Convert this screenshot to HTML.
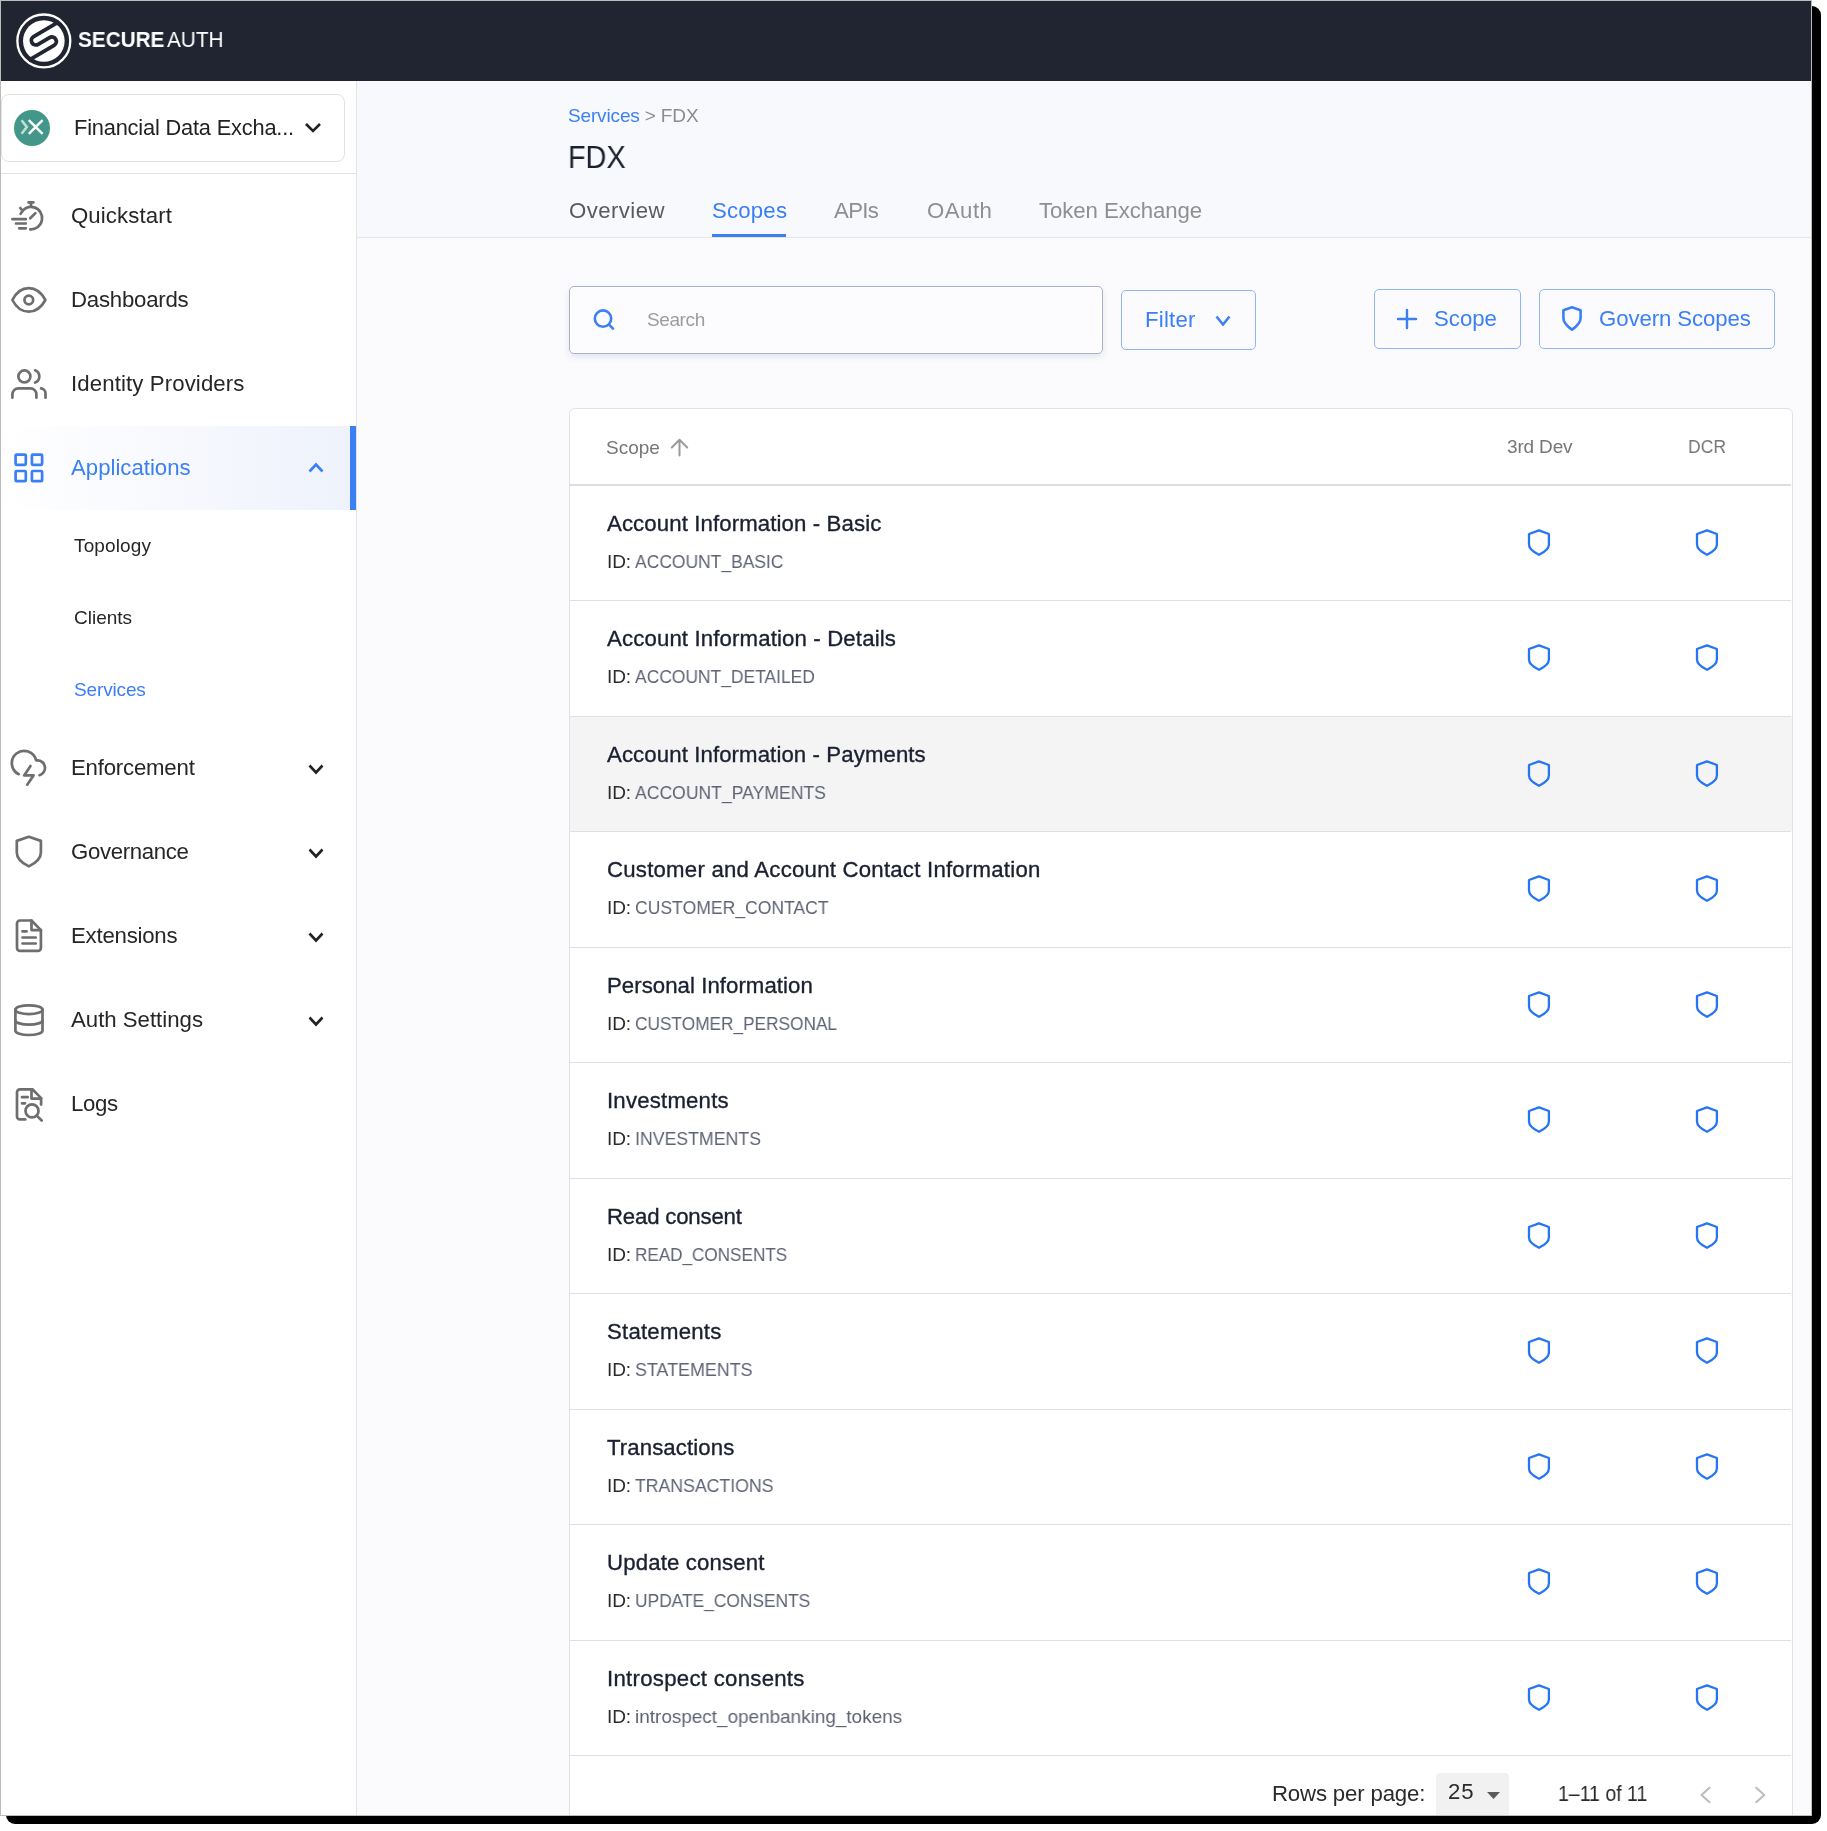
<!DOCTYPE html><html><head><meta charset="utf-8"><title>SecureAuth - FDX Scopes</title><style>
*{margin:0;padding:0;box-sizing:border-box}
html,body{width:1827px;height:1831px;background:#fff;overflow:hidden;font-family:"Liberation Sans",sans-serif}
.t{position:absolute;white-space:nowrap;will-change:transform}
.abs{position:absolute}
svg{position:absolute;overflow:visible}
</style></head><body>
<div class="abs" style="left:6px;top:6px;width:1815px;height:1818px;background:#000;border-radius:9px"></div>
<div class="abs" style="left:0;top:0;width:1812px;height:1816px;background:#fbfbfd;border:1px solid #bcbcbc;overflow:hidden">
<div style="position:absolute;left:-1px;top:-1px;width:1812px;height:1816px">
<div class="abs" style="left:0;top:0;width:1812px;height:81px;background:#212531"></div>
<svg style="left:15.5px;top:12.5px" width="56" height="56" viewBox="0 0 56 56">
<circle cx="27.83" cy="27.95" r="26.45" fill="none" stroke="#fff" stroke-width="2.3"/>
<circle cx="27.83" cy="27.95" r="20.8" fill="#fff"/>
<g transform="translate(27.83 27.95) rotate(-30.4)">
<path d="M 23 -9 L -6.6 -9 A 4.5 4.5 0 0 0 -6.6 0 L 6.6 0 A 4.5 4.5 0 0 1 6.6 9 L -23 9" fill="none" stroke="#212531" stroke-width="3.8"/>
</g></svg>
<div class="t" style="left:77.50px;top:29.16px;font-size:22.6px;line-height:22.6px;color:#fff;font-weight:700;letter-spacing:0.000px;transform:scaleX(0.918);transform-origin:0 0;">SECURE</div>
<div class="t" style="left:167.00px;top:29.16px;font-size:22.6px;line-height:22.6px;color:#fff;font-weight:400;letter-spacing:0.000px;transform:scaleX(0.918);transform-origin:0 0;">AUTH</div>
<div class="abs" style="left:0;top:81px;width:357px;height:1740px;background:#fff;border-right:1px solid #e4e4e4"></div>
<div class="abs" style="left:1px;top:94px;width:344px;height:68px;border:1px solid #e2e2e2;border-radius:8px;background:#fff"></div>
<div class="abs" style="left:14px;top:110px;width:36px;height:36px;border-radius:50%;background:#43978a"></div>
<svg style="left:14px;top:110px" width="36" height="36" viewBox="0 0 36 36">
<path d="M7.6 10.2 L12.8 17 L7.6 23.8" fill="none" stroke="#c3ddd6" stroke-width="2.6"/>
<path d="M14.8 10.2 L28.6 23.8 M28.6 10.2 L14.8 23.8" fill="none" stroke="#fff" stroke-width="2.4"/>
</svg>
<div class="t" id="k_org" style="left:73.60px;top:116.54px;font-size:21.8px;line-height:21.8px;color:#222;font-weight:400;letter-spacing:-0.182px;">Financial Data Excha...</div>
<svg style="left:304px;top:122px" width="18" height="12" viewBox="0 0 18 12"><path d="M2 2 L9 9 L16 2" fill="none" stroke="#222" stroke-width="2.6"/></svg>
<div class="abs" style="left:0;top:173px;width:356px;height:1px;background:#e3e3e3"></div>
<div class="abs" style="left:1px;top:426px;width:355px;height:84px;background:linear-gradient(90deg,#ffffff 0%,#eef2fc 100%)"></div>
<div class="abs" style="left:350px;top:426px;width:6px;height:84px;background:#3b7ff5"></div>
<svg style="left:5px;top:195px" width="50" height="40" viewBox="0 0 50 40"><g fill="none" stroke="#6e6e6e" stroke-width="2.7" stroke-linecap="round" stroke-linejoin="round"><path d="M25.2 34.3 A11.2 11.2 0 1 0 15.6 18.8"/><path d="M23.5 7.4 H28.4 M26 8.2 V11.6"/><path d="M15.3 13 L16.4 14.3"/><path d="M25.2 23.3 L30.4 18.1"/><path d="M7.4 24.2 H20.8 M11 28.5 H20.8 M14.2 33.3 H20.8"/></g></svg>
<svg style="left:5px;top:280px" width="50" height="40" viewBox="0 0 50 40"><g fill="none" stroke="#6e6e6e" stroke-width="2.7" stroke-linecap="round" stroke-linejoin="round"><path d="M7.4 20 C11 13 17 8.2 23.8 8.2 C30.6 8.2 36.6 13 40.4 20 C36.6 27 30.6 31.7 23.8 31.7 C17 31.7 11 27 7.4 20 Z"/><circle cx="23.8" cy="20" r="4.35"/></g></svg>
<svg style="left:5px;top:364px" width="50" height="40" viewBox="0 0 50 40"><g fill="none" stroke="#6e6e6e" stroke-width="2.7" stroke-linecap="round" stroke-linejoin="round"><circle cx="19.4" cy="12.45" r="6"/><path d="M30.1 6.3 A6.6 6.6 0 0 1 30.1 18.6"/><path d="M7.4 33.7 V30.4 A6 6 0 0 1 13.4 24.4 H25.4 A6 6 0 0 1 31.4 30.4 V33.7"/><path d="M36.1 24.4 A5 5 0 0 1 40.5 29.5 V33.7"/></g></svg>
<svg style="left:5px;top:445px" width="50" height="45" viewBox="0 0 50 45"><g fill="none" stroke="#3b7ff5" stroke-width="2.7" stroke-linecap="round" stroke-linejoin="round"><rect x="10.6" y="9.6" width="10.2" height="10.2" rx="1"/><rect x="26.9" y="9.6" width="10.2" height="10.2" rx="1"/><rect x="10.6" y="26" width="10.2" height="10.2" rx="1"/><rect x="26.9" y="26" width="10.2" height="10.2" rx="1"/></g></svg>
<svg style="left:5px;top:745px" width="50" height="45" viewBox="0 0 50 45"><g fill="none" stroke="#6e6e6e" stroke-width="2.7" stroke-linecap="round" stroke-linejoin="round"><path d="M13.7 29.2 A12.3 12.3 0 1 1 31.1 15.3 H32.3 A7.6 7.6 0 0 1 34.5 30.2"/><path d="M25.5 21 L19.2 30.4 H28.5 L22.2 39.7"/></g></svg>
<svg style="left:5px;top:830px" width="50" height="45" viewBox="0 0 50 45"><g fill="none" stroke="#6e6e6e" stroke-width="2.7" stroke-linecap="round" stroke-linejoin="round"><path d="M23.8 6.8 L11.8 10.9 V22.4 C11.8 29 17 33 23.8 36.4 C30.6 33 35.9 29 35.9 22.4 V10.9 Z"/></g></svg>
<svg style="left:5px;top:912px" width="50" height="48" viewBox="0 0 50 48"><g fill="none" stroke="#6e6e6e" stroke-width="2.7" stroke-linecap="round" stroke-linejoin="round"><path d="M26.5 8.5 H15 A3 3 0 0 0 12 11.5 V35.9 A3 3 0 0 0 15 38.9 H32.9 A3 3 0 0 0 35.9 35.9 V18.1 Z"/><path d="M26.5 8.5 V18.1 H35.9"/><path d="M17.5 19.4 H21.6 M17.5 25.5 H30.7 M17.5 31.5 H30.7"/></g></svg>
<svg style="left:5px;top:996px" width="50" height="48" viewBox="0 0 50 48"><g fill="none" stroke="#6e6e6e" stroke-width="2.7" stroke-linecap="round" stroke-linejoin="round"><ellipse cx="23.95" cy="13.7" rx="13.55" ry="4.4"/><path d="M10.4 13.7 V34.8 A13.55 4.2 0 0 0 37.5 34.8 V13.7"/><path d="M10.4 24.4 A13.55 4.2 0 0 0 37.5 24.4"/></g></svg>
<svg style="left:5px;top:1080px" width="50" height="48" viewBox="0 0 50 48"><g fill="none" stroke="#6e6e6e" stroke-width="2.7" stroke-linecap="round" stroke-linejoin="round"><path d="M20.3 39.4 H15 A3 3 0 0 1 12 36.4 V12.3 A3 3 0 0 1 15 9.3 H27.4 L36.1 18.1 V24.6"/><path d="M26.5 9.3 V18.6 H36.1"/><path d="M17 17.2 H22.7 M17 23.3 H20"/><circle cx="27" cy="30.9" r="6.5"/><path d="M32 35.9 L36.7 40.5"/></g></svg>
<div class="t" id="k_side0" style="left:70.50px;top:204.80px;font-size:22.2px;line-height:22.2px;color:#262626;font-weight:400;letter-spacing:0.108px;">Quickstart</div>
<div class="t" id="k_side1" style="left:70.50px;top:288.80px;font-size:22.2px;line-height:22.2px;color:#262626;font-weight:400;letter-spacing:-0.223px;">Dashboards</div>
<div class="t" id="k_side2" style="left:70.50px;top:372.80px;font-size:22.2px;line-height:22.2px;color:#262626;font-weight:400;letter-spacing:0.117px;">Identity Providers</div>
<div class="t" id="k_side3" style="left:70.50px;top:756.80px;font-size:22.2px;line-height:22.2px;color:#262626;font-weight:400;letter-spacing:-0.200px;">Enforcement</div>
<div class="t" id="k_side4" style="left:70.50px;top:840.80px;font-size:22.2px;line-height:22.2px;color:#262626;font-weight:400;letter-spacing:-0.335px;">Governance</div>
<div class="t" id="k_side5" style="left:70.50px;top:924.80px;font-size:22.2px;line-height:22.2px;color:#262626;font-weight:400;letter-spacing:-0.220px;">Extensions</div>
<div class="t" id="k_side6" style="left:70.50px;top:1008.80px;font-size:22.2px;line-height:22.2px;color:#262626;font-weight:400;letter-spacing:-0.000px;">Auth Settings</div>
<div class="t" id="k_side7" style="left:70.50px;top:1092.80px;font-size:22.2px;line-height:22.2px;color:#262626;font-weight:400;letter-spacing:-0.333px;">Logs</div>
<div class="t" id="k_apps" style="left:71.00px;top:456.80px;font-size:22.2px;line-height:22.2px;color:#3b7ff5;font-weight:400;letter-spacing:0.000px;">Applications</div>
<div class="t" id="k_sub0" style="left:74.00px;top:535.91px;font-size:19px;line-height:19px;color:#262626;font-weight:400;letter-spacing:0.140px;">Topology</div>
<div class="t" id="k_sub1" style="left:74.00px;top:607.91px;font-size:19px;line-height:19px;color:#262626;font-weight:400;letter-spacing:0.000px;">Clients</div>
<div class="t" id="k_sub2" style="left:74.00px;top:679.91px;font-size:19px;line-height:19px;color:#3b7ff5;font-weight:400;letter-spacing:-0.140px;">Services</div>
<svg style="left:308px;top:462.5px" width="16" height="10" viewBox="0 0 16 10"><path d="M1.5 8.5 L8.0 1.5 L14.5 8.5" fill="none" stroke="#3b7ff5" stroke-width="2.6"/></svg>
<svg style="left:308px;top:763.5px" width="16" height="10" viewBox="0 0 16 10"><path d="M1.5 1.5 L8.0 8.5 L14.5 1.5" fill="none" stroke="#222" stroke-width="2.6"/></svg>
<svg style="left:308px;top:847.5px" width="16" height="10" viewBox="0 0 16 10"><path d="M1.5 1.5 L8.0 8.5 L14.5 1.5" fill="none" stroke="#222" stroke-width="2.6"/></svg>
<svg style="left:308px;top:931.5px" width="16" height="10" viewBox="0 0 16 10"><path d="M1.5 1.5 L8.0 8.5 L14.5 1.5" fill="none" stroke="#222" stroke-width="2.6"/></svg>
<svg style="left:308px;top:1015.5px" width="16" height="10" viewBox="0 0 16 10"><path d="M1.5 1.5 L8.0 8.5 L14.5 1.5" fill="none" stroke="#222" stroke-width="2.6"/></svg>
<div class="abs" style="left:357px;top:81px;width:1455px;height:156px;background:#f8f9fc"></div>
<div class="abs" style="left:357px;top:237px;width:1455px;height:1px;background:#e6e6e6"></div>
<div class="t" id="k_bc" style="left:568.00px;top:105.91px;font-size:19px;line-height:19px;color:#8c8c8c;font-weight:400;letter-spacing:-0.150px;"><span style="color:#3b7ff5">Services</span> &gt; FDX</div>
<div class="t" style="left:567.90px;top:141.66px;font-size:31.7px;line-height:31.7px;color:#1c2130;font-weight:400;letter-spacing:0.000px;transform:scaleX(0.91);transform-origin:0 0;">FDX</div>
<div class="t" id="k_tab0" style="left:568.50px;top:200.00px;font-size:22.2px;line-height:22.2px;color:#5a5a5a;font-weight:400;letter-spacing:0.430px;">Overview</div>
<div class="t" id="k_tab1" style="left:711.50px;top:200.00px;font-size:22.2px;line-height:22.2px;color:#3b7ff5;font-weight:400;letter-spacing:0.200px;">Scopes</div>
<div class="t" id="k_tab2" style="left:834.00px;top:200.00px;font-size:22.2px;line-height:22.2px;color:#8f8f8f;font-weight:400;letter-spacing:-0.668px;">APIs</div>
<div class="t" id="k_tab3" style="left:926.50px;top:200.00px;font-size:22.2px;line-height:22.2px;color:#8f8f8f;font-weight:400;letter-spacing:0.500px;">OAuth</div>
<div class="t" id="k_tab4" style="left:1038.50px;top:200.00px;font-size:22.2px;line-height:22.2px;color:#8f8f8f;font-weight:400;letter-spacing:-0.076px;">Token Exchange</div>
<div class="abs" style="left:712px;top:234px;width:74px;height:3px;background:#3b7ff5"></div>
<div class="abs" style="left:569px;top:286px;width:534px;height:68px;border:1px solid #aab0d2;border-radius:5px;background:#fcfcfe;box-shadow:0 3px 6px rgba(60,70,110,0.12), inset 0 0 0 1px #fff"></div>
<svg style="left:590px;top:306px" width="28" height="28" viewBox="0 0 28 28"><g fill="none" stroke="#3b7ff5" stroke-width="2.6" stroke-linecap="round" stroke-linejoin="round"><circle cx="13" cy="12.6" r="8.2"/><path d="M19 18.6 L23 22.6"/></g></svg>
<div class="t" id="k_search" style="left:647.00px;top:309.91px;font-size:19px;line-height:19px;color:#9c9c9c;font-weight:400;letter-spacing:-0.400px;">Search</div>
<div class="abs" style="left:1121px;top:290px;width:135px;height:60px;border:1px solid #8fb5f6;border-radius:5px"></div>
<div class="t" id="k_filter" style="left:1144.80px;top:308.80px;font-size:22.2px;line-height:22.2px;color:#3b7ff5;font-weight:400;letter-spacing:0.200px;">Filter</div>
<svg style="left:1215px;top:315px" width="16" height="11" viewBox="0 0 16 11"><path d="M1.5 1.5 L8.0 9.5 L14.5 1.5" fill="none" stroke="#3b7ff5" stroke-width="2.6"/></svg>
<div class="abs" style="left:1374px;top:289px;width:147px;height:60px;border:1px solid #8fb5f6;border-radius:5px"></div>
<svg style="left:1390px;top:302px" width="34" height="34" viewBox="0 0 34 34"><g fill="none" stroke="#3b7ff5" stroke-width="2.4" stroke-linecap="round" stroke-linejoin="round"><path d="M17 8 V26 M8 17 H26"/></g></svg>
<div class="t" id="k_scopebtn" style="left:1434.00px;top:307.90px;font-size:22.2px;line-height:22.2px;color:#3b7ff5;font-weight:400;letter-spacing:-0.000px;">Scope</div>
<div class="abs" style="left:1539px;top:289px;width:236px;height:60px;border:1px solid #8fb5f6;border-radius:5px"></div>
<svg style="left:1561px;top:305px" width="22" height="28" viewBox="0 0 22 28"><g fill="none" stroke="#3b7ff5" stroke-width="2.6" stroke-linecap="round" stroke-linejoin="round"><path d="M11 2.2 L2.4 5.2 V13 C2.4 17.6 6 21.2 11 24.6 C16 21.2 19.6 17.6 19.6 13 V5.2 Z"/></g></svg>
<div class="t" id="k_govern" style="left:1599.20px;top:307.80px;font-size:22.2px;line-height:22.2px;color:#3b7ff5;font-weight:400;letter-spacing:-0.084px;">Govern Scopes</div>
<div class="abs" style="left:569px;top:408px;width:1224px;height:1430px;background:#fff;border:1px solid #e2e2e2;border-radius:6px"></div>
<div class="t" id="k_hscope" style="left:606.40px;top:437.91px;font-size:19px;line-height:19px;color:#767676;font-weight:400;letter-spacing:0.000px;">Scope</div>
<svg style="left:666px;top:435px" width="26" height="24" viewBox="0 0 26 24"><g fill="none" stroke="#9a9a9a" stroke-width="2" stroke-linecap="round" stroke-linejoin="round"><path d="M13.5 20.5 V5 M5.8 12.5 L13.5 4.8 L21.2 12.5"/></g></svg>
<div class="t" id="k_h3rd" style="left:1507.00px;top:436.91px;font-size:19px;line-height:19px;color:#767676;font-weight:400;letter-spacing:-0.166px;">3rd Dev</div>
<div class="t" id="k_hdcr" style="left:1688.30px;top:436.91px;font-size:19px;line-height:19px;color:#767676;font-weight:400;letter-spacing:0.000px;transform:scaleX(0.9228);transform-origin:0 0;">DCR</div>
<div class="abs" style="left:570px;top:484px;width:1221px;height:2px;background:#dddddd"></div>
<div class="t" id="k_title0" style="left:606.90px;top:512.80px;font-size:22.2px;line-height:22.2px;color:#1b2030;font-weight:400;letter-spacing:0.116px;-webkit-text-stroke:0.35px #1b2030;">Account Information - Basic</div>
<div class="t" id="k_idl0" style="left:606.50px;top:551.91px;font-size:19px;line-height:19px;color:#2a2a2a;font-weight:400;letter-spacing:-0.100px;">ID:</div>
<div class="t" id="k_id0" style="left:634.50px;top:551.91px;font-size:19px;line-height:19px;color:#5e6375;font-weight:400;letter-spacing:0.000px;transform:scaleX(0.9193);transform-origin:0 0;">ACCOUNT_BASIC</div>
<svg style="left:1524px;top:525.8px" width="30" height="34" viewBox="0 0 30 34"><g fill="none" stroke="#2675f3" stroke-width="2.3" stroke-linecap="round" stroke-linejoin="round"><path d="M15 4.45 L5 8 V18.6 C5 22.5 9 26 15 28.8 C21 26 24.9 22.5 24.9 18.6 V8 Z"/></g></svg>
<svg style="left:1692px;top:525.8px" width="30" height="34" viewBox="0 0 30 34"><g fill="none" stroke="#2675f3" stroke-width="2.3" stroke-linecap="round" stroke-linejoin="round"><path d="M15 4.45 L5 8 V18.6 C5 22.5 9 26 15 28.8 C21 26 24.9 22.5 24.9 18.6 V8 Z"/></g></svg>
<div class="abs" style="left:570px;top:600px;width:1221px;height:1px;background:#e0e0e0"></div>
<div class="t" id="k_title1" style="left:606.90px;top:628.30px;font-size:22.2px;line-height:22.2px;color:#1b2030;font-weight:400;letter-spacing:0.143px;-webkit-text-stroke:0.35px #1b2030;">Account Information - Details</div>
<div class="t" id="k_idl1" style="left:606.50px;top:667.41px;font-size:19px;line-height:19px;color:#2a2a2a;font-weight:400;letter-spacing:-0.100px;">ID:</div>
<div class="t" id="k_id1" style="left:634.50px;top:667.41px;font-size:19px;line-height:19px;color:#5e6375;font-weight:400;letter-spacing:0.000px;transform:scaleX(0.9179);transform-origin:0 0;">ACCOUNT_DETAILED</div>
<svg style="left:1524px;top:641.3px" width="30" height="34" viewBox="0 0 30 34"><g fill="none" stroke="#2675f3" stroke-width="2.3" stroke-linecap="round" stroke-linejoin="round"><path d="M15 4.45 L5 8 V18.6 C5 22.5 9 26 15 28.8 C21 26 24.9 22.5 24.9 18.6 V8 Z"/></g></svg>
<svg style="left:1692px;top:641.3px" width="30" height="34" viewBox="0 0 30 34"><g fill="none" stroke="#2675f3" stroke-width="2.3" stroke-linecap="round" stroke-linejoin="round"><path d="M15 4.45 L5 8 V18.6 C5 22.5 9 26 15 28.8 C21 26 24.9 22.5 24.9 18.6 V8 Z"/></g></svg>
<div class="abs" style="left:570px;top:716px;width:1221px;height:1px;background:#e0e0e0"></div>
<div class="abs" style="left:570px;top:717px;width:1222px;height:114px;background:#f4f4f4"></div>
<div class="t" id="k_title2" style="left:606.90px;top:743.80px;font-size:22.2px;line-height:22.2px;color:#1b2030;font-weight:400;letter-spacing:0.104px;-webkit-text-stroke:0.35px #1b2030;">Account Information - Payments</div>
<div class="t" id="k_idl2" style="left:606.50px;top:782.91px;font-size:19px;line-height:19px;color:#2a2a2a;font-weight:400;letter-spacing:-0.100px;">ID:</div>
<div class="t" id="k_id2" style="left:634.50px;top:782.91px;font-size:19px;line-height:19px;color:#5e6375;font-weight:400;letter-spacing:0.000px;transform:scaleX(0.9257);transform-origin:0 0;">ACCOUNT_PAYMENTS</div>
<svg style="left:1524px;top:756.8px" width="30" height="34" viewBox="0 0 30 34"><g fill="none" stroke="#2675f3" stroke-width="2.3" stroke-linecap="round" stroke-linejoin="round"><path d="M15 4.45 L5 8 V18.6 C5 22.5 9 26 15 28.8 C21 26 24.9 22.5 24.9 18.6 V8 Z"/></g></svg>
<svg style="left:1692px;top:756.8px" width="30" height="34" viewBox="0 0 30 34"><g fill="none" stroke="#2675f3" stroke-width="2.3" stroke-linecap="round" stroke-linejoin="round"><path d="M15 4.45 L5 8 V18.6 C5 22.5 9 26 15 28.8 C21 26 24.9 22.5 24.9 18.6 V8 Z"/></g></svg>
<div class="abs" style="left:570px;top:831px;width:1221px;height:1px;background:#e0e0e0"></div>
<div class="t" id="k_title3" style="left:606.90px;top:859.30px;font-size:22.2px;line-height:22.2px;color:#1b2030;font-weight:400;letter-spacing:0.232px;-webkit-text-stroke:0.35px #1b2030;">Customer and Account Contact Information</div>
<div class="t" id="k_idl3" style="left:606.50px;top:898.41px;font-size:19px;line-height:19px;color:#2a2a2a;font-weight:400;letter-spacing:-0.100px;">ID:</div>
<div class="t" id="k_id3" style="left:634.50px;top:898.41px;font-size:19px;line-height:19px;color:#5e6375;font-weight:400;letter-spacing:0.000px;transform:scaleX(0.9246);transform-origin:0 0;">CUSTOMER_CONTACT</div>
<svg style="left:1524px;top:872.3px" width="30" height="34" viewBox="0 0 30 34"><g fill="none" stroke="#2675f3" stroke-width="2.3" stroke-linecap="round" stroke-linejoin="round"><path d="M15 4.45 L5 8 V18.6 C5 22.5 9 26 15 28.8 C21 26 24.9 22.5 24.9 18.6 V8 Z"/></g></svg>
<svg style="left:1692px;top:872.3px" width="30" height="34" viewBox="0 0 30 34"><g fill="none" stroke="#2675f3" stroke-width="2.3" stroke-linecap="round" stroke-linejoin="round"><path d="M15 4.45 L5 8 V18.6 C5 22.5 9 26 15 28.8 C21 26 24.9 22.5 24.9 18.6 V8 Z"/></g></svg>
<div class="abs" style="left:570px;top:947px;width:1221px;height:1px;background:#e0e0e0"></div>
<div class="t" id="k_title4" style="left:606.90px;top:974.80px;font-size:22.2px;line-height:22.2px;color:#1b2030;font-weight:400;letter-spacing:0.053px;-webkit-text-stroke:0.35px #1b2030;">Personal Information</div>
<div class="t" id="k_idl4" style="left:606.50px;top:1013.91px;font-size:19px;line-height:19px;color:#2a2a2a;font-weight:400;letter-spacing:-0.100px;">ID:</div>
<div class="t" id="k_id4" style="left:634.50px;top:1013.91px;font-size:19px;line-height:19px;color:#5e6375;font-weight:400;letter-spacing:0.000px;transform:scaleX(0.9083);transform-origin:0 0;">CUSTOMER_PERSONAL</div>
<svg style="left:1524px;top:987.8px" width="30" height="34" viewBox="0 0 30 34"><g fill="none" stroke="#2675f3" stroke-width="2.3" stroke-linecap="round" stroke-linejoin="round"><path d="M15 4.45 L5 8 V18.6 C5 22.5 9 26 15 28.8 C21 26 24.9 22.5 24.9 18.6 V8 Z"/></g></svg>
<svg style="left:1692px;top:987.8px" width="30" height="34" viewBox="0 0 30 34"><g fill="none" stroke="#2675f3" stroke-width="2.3" stroke-linecap="round" stroke-linejoin="round"><path d="M15 4.45 L5 8 V18.6 C5 22.5 9 26 15 28.8 C21 26 24.9 22.5 24.9 18.6 V8 Z"/></g></svg>
<div class="abs" style="left:570px;top:1062px;width:1221px;height:1px;background:#e0e0e0"></div>
<div class="t" id="k_title5" style="left:606.90px;top:1090.30px;font-size:22.2px;line-height:22.2px;color:#1b2030;font-weight:400;letter-spacing:0.200px;-webkit-text-stroke:0.35px #1b2030;">Investments</div>
<div class="t" id="k_idl5" style="left:606.50px;top:1129.41px;font-size:19px;line-height:19px;color:#2a2a2a;font-weight:400;letter-spacing:-0.100px;">ID:</div>
<div class="t" id="k_id5" style="left:634.50px;top:1129.41px;font-size:19px;line-height:19px;color:#5e6375;font-weight:400;letter-spacing:0.000px;transform:scaleX(0.9328);transform-origin:0 0;">INVESTMENTS</div>
<svg style="left:1524px;top:1103.3px" width="30" height="34" viewBox="0 0 30 34"><g fill="none" stroke="#2675f3" stroke-width="2.3" stroke-linecap="round" stroke-linejoin="round"><path d="M15 4.45 L5 8 V18.6 C5 22.5 9 26 15 28.8 C21 26 24.9 22.5 24.9 18.6 V8 Z"/></g></svg>
<svg style="left:1692px;top:1103.3px" width="30" height="34" viewBox="0 0 30 34"><g fill="none" stroke="#2675f3" stroke-width="2.3" stroke-linecap="round" stroke-linejoin="round"><path d="M15 4.45 L5 8 V18.6 C5 22.5 9 26 15 28.8 C21 26 24.9 22.5 24.9 18.6 V8 Z"/></g></svg>
<div class="abs" style="left:570px;top:1178px;width:1221px;height:1px;background:#e0e0e0"></div>
<div class="t" id="k_title6" style="left:606.90px;top:1205.80px;font-size:22.2px;line-height:22.2px;color:#1b2030;font-weight:400;letter-spacing:-0.185px;-webkit-text-stroke:0.35px #1b2030;">Read consent</div>
<div class="t" id="k_idl6" style="left:606.50px;top:1244.91px;font-size:19px;line-height:19px;color:#2a2a2a;font-weight:400;letter-spacing:-0.100px;">ID:</div>
<div class="t" id="k_id6" style="left:634.50px;top:1244.91px;font-size:19px;line-height:19px;color:#5e6375;font-weight:400;letter-spacing:0.000px;transform:scaleX(0.9006);transform-origin:0 0;">READ_CONSENTS</div>
<svg style="left:1524px;top:1218.8px" width="30" height="34" viewBox="0 0 30 34"><g fill="none" stroke="#2675f3" stroke-width="2.3" stroke-linecap="round" stroke-linejoin="round"><path d="M15 4.45 L5 8 V18.6 C5 22.5 9 26 15 28.8 C21 26 24.9 22.5 24.9 18.6 V8 Z"/></g></svg>
<svg style="left:1692px;top:1218.8px" width="30" height="34" viewBox="0 0 30 34"><g fill="none" stroke="#2675f3" stroke-width="2.3" stroke-linecap="round" stroke-linejoin="round"><path d="M15 4.45 L5 8 V18.6 C5 22.5 9 26 15 28.8 C21 26 24.9 22.5 24.9 18.6 V8 Z"/></g></svg>
<div class="abs" style="left:570px;top:1293px;width:1221px;height:1px;background:#e0e0e0"></div>
<div class="t" id="k_title7" style="left:606.90px;top:1321.30px;font-size:22.2px;line-height:22.2px;color:#1b2030;font-weight:400;letter-spacing:0.225px;-webkit-text-stroke:0.35px #1b2030;">Statements</div>
<div class="t" id="k_idl7" style="left:606.50px;top:1360.41px;font-size:19px;line-height:19px;color:#2a2a2a;font-weight:400;letter-spacing:-0.100px;">ID:</div>
<div class="t" id="k_id7" style="left:634.50px;top:1360.41px;font-size:19px;line-height:19px;color:#5e6375;font-weight:400;letter-spacing:0.000px;transform:scaleX(0.9406);transform-origin:0 0;">STATEMENTS</div>
<svg style="left:1524px;top:1334.3px" width="30" height="34" viewBox="0 0 30 34"><g fill="none" stroke="#2675f3" stroke-width="2.3" stroke-linecap="round" stroke-linejoin="round"><path d="M15 4.45 L5 8 V18.6 C5 22.5 9 26 15 28.8 C21 26 24.9 22.5 24.9 18.6 V8 Z"/></g></svg>
<svg style="left:1692px;top:1334.3px" width="30" height="34" viewBox="0 0 30 34"><g fill="none" stroke="#2675f3" stroke-width="2.3" stroke-linecap="round" stroke-linejoin="round"><path d="M15 4.45 L5 8 V18.6 C5 22.5 9 26 15 28.8 C21 26 24.9 22.5 24.9 18.6 V8 Z"/></g></svg>
<div class="abs" style="left:570px;top:1409px;width:1221px;height:1px;background:#e0e0e0"></div>
<div class="t" id="k_title8" style="left:606.90px;top:1436.80px;font-size:22.2px;line-height:22.2px;color:#1b2030;font-weight:400;letter-spacing:0.094px;-webkit-text-stroke:0.35px #1b2030;">Transactions</div>
<div class="t" id="k_idl8" style="left:606.50px;top:1475.91px;font-size:19px;line-height:19px;color:#2a2a2a;font-weight:400;letter-spacing:-0.100px;">ID:</div>
<div class="t" id="k_id8" style="left:634.50px;top:1475.91px;font-size:19px;line-height:19px;color:#5e6375;font-weight:400;letter-spacing:0.000px;transform:scaleX(0.9297);transform-origin:0 0;">TRANSACTIONS</div>
<svg style="left:1524px;top:1449.8px" width="30" height="34" viewBox="0 0 30 34"><g fill="none" stroke="#2675f3" stroke-width="2.3" stroke-linecap="round" stroke-linejoin="round"><path d="M15 4.45 L5 8 V18.6 C5 22.5 9 26 15 28.8 C21 26 24.9 22.5 24.9 18.6 V8 Z"/></g></svg>
<svg style="left:1692px;top:1449.8px" width="30" height="34" viewBox="0 0 30 34"><g fill="none" stroke="#2675f3" stroke-width="2.3" stroke-linecap="round" stroke-linejoin="round"><path d="M15 4.45 L5 8 V18.6 C5 22.5 9 26 15 28.8 C21 26 24.9 22.5 24.9 18.6 V8 Z"/></g></svg>
<div class="abs" style="left:570px;top:1524px;width:1221px;height:1px;background:#e0e0e0"></div>
<div class="t" id="k_title9" style="left:606.90px;top:1552.30px;font-size:22.2px;line-height:22.2px;color:#1b2030;font-weight:400;letter-spacing:0.154px;-webkit-text-stroke:0.35px #1b2030;">Update consent</div>
<div class="t" id="k_idl9" style="left:606.50px;top:1591.41px;font-size:19px;line-height:19px;color:#2a2a2a;font-weight:400;letter-spacing:-0.100px;">ID:</div>
<div class="t" id="k_id9" style="left:634.50px;top:1591.41px;font-size:19px;line-height:19px;color:#5e6375;font-weight:400;letter-spacing:0.000px;transform:scaleX(0.9138);transform-origin:0 0;">UPDATE_CONSENTS</div>
<svg style="left:1524px;top:1565.3px" width="30" height="34" viewBox="0 0 30 34"><g fill="none" stroke="#2675f3" stroke-width="2.3" stroke-linecap="round" stroke-linejoin="round"><path d="M15 4.45 L5 8 V18.6 C5 22.5 9 26 15 28.8 C21 26 24.9 22.5 24.9 18.6 V8 Z"/></g></svg>
<svg style="left:1692px;top:1565.3px" width="30" height="34" viewBox="0 0 30 34"><g fill="none" stroke="#2675f3" stroke-width="2.3" stroke-linecap="round" stroke-linejoin="round"><path d="M15 4.45 L5 8 V18.6 C5 22.5 9 26 15 28.8 C21 26 24.9 22.5 24.9 18.6 V8 Z"/></g></svg>
<div class="abs" style="left:570px;top:1640px;width:1221px;height:1px;background:#e0e0e0"></div>
<div class="t" id="k_title10" style="left:606.90px;top:1667.80px;font-size:22.2px;line-height:22.2px;color:#1b2030;font-weight:400;letter-spacing:0.278px;-webkit-text-stroke:0.35px #1b2030;">Introspect consents</div>
<div class="t" id="k_idl10" style="left:606.50px;top:1706.91px;font-size:19px;line-height:19px;color:#2a2a2a;font-weight:400;letter-spacing:-0.100px;">ID:</div>
<div class="t" id="k_id10" style="left:634.50px;top:1706.91px;font-size:19px;line-height:19px;color:#5e6375;font-weight:400;letter-spacing:0.000px;transform:scaleX(0.9955);transform-origin:0 0;">introspect_openbanking_tokens</div>
<svg style="left:1524px;top:1680.8px" width="30" height="34" viewBox="0 0 30 34"><g fill="none" stroke="#2675f3" stroke-width="2.3" stroke-linecap="round" stroke-linejoin="round"><path d="M15 4.45 L5 8 V18.6 C5 22.5 9 26 15 28.8 C21 26 24.9 22.5 24.9 18.6 V8 Z"/></g></svg>
<svg style="left:1692px;top:1680.8px" width="30" height="34" viewBox="0 0 30 34"><g fill="none" stroke="#2675f3" stroke-width="2.3" stroke-linecap="round" stroke-linejoin="round"><path d="M15 4.45 L5 8 V18.6 C5 22.5 9 26 15 28.8 C21 26 24.9 22.5 24.9 18.6 V8 Z"/></g></svg>
<div class="abs" style="left:570px;top:1755px;width:1221px;height:1px;background:#e0e0e0"></div>
<div class="t" id="k_rpp" style="left:1272.00px;top:1783.40px;font-size:22.2px;line-height:22.2px;color:#2a2a2a;font-weight:400;letter-spacing:-0.154px;">Rows per page:</div>
<div class="abs" style="left:1436px;top:1773px;width:73px;height:60px;background:#f1f1f1;border-radius:4px 4px 0 0"></div>
<div class="t" id="k_25" style="left:1447.70px;top:1780.60px;font-size:22.2px;line-height:22.2px;color:#2a2a2a;font-weight:400;letter-spacing:1.000px;">25</div>
<svg style="left:1486px;top:1791px" width="15" height="9" viewBox="0 0 15 9"><path d="M1 1 H14 L7.5 8 Z" fill="#5a5a5a"/></svg>
<div class="t" id="k_range" style="left:1557.60px;top:1783.40px;font-size:22.2px;line-height:22.2px;color:#2a2a2a;font-weight:400;letter-spacing:0.000px;transform:scaleX(0.8790);transform-origin:0 0;">1–11 of 11</div>
<svg style="left:1695px;top:1783px" width="20" height="24" viewBox="0 0 20 24"><g fill="none" stroke="#bcbcbc" stroke-width="2.1" stroke-linecap="round" stroke-linejoin="round"><path d="M14.5 4.8 L6.5 12 L14.5 19.2"/></g></svg>
<svg style="left:1750px;top:1783px" width="20" height="24" viewBox="0 0 20 24"><g fill="none" stroke="#bcbcbc" stroke-width="2.1" stroke-linecap="round" stroke-linejoin="round"><path d="M6.2 4.8 L14.2 12 L6.2 19.2"/></g></svg>
</div></div>
</body></html>
